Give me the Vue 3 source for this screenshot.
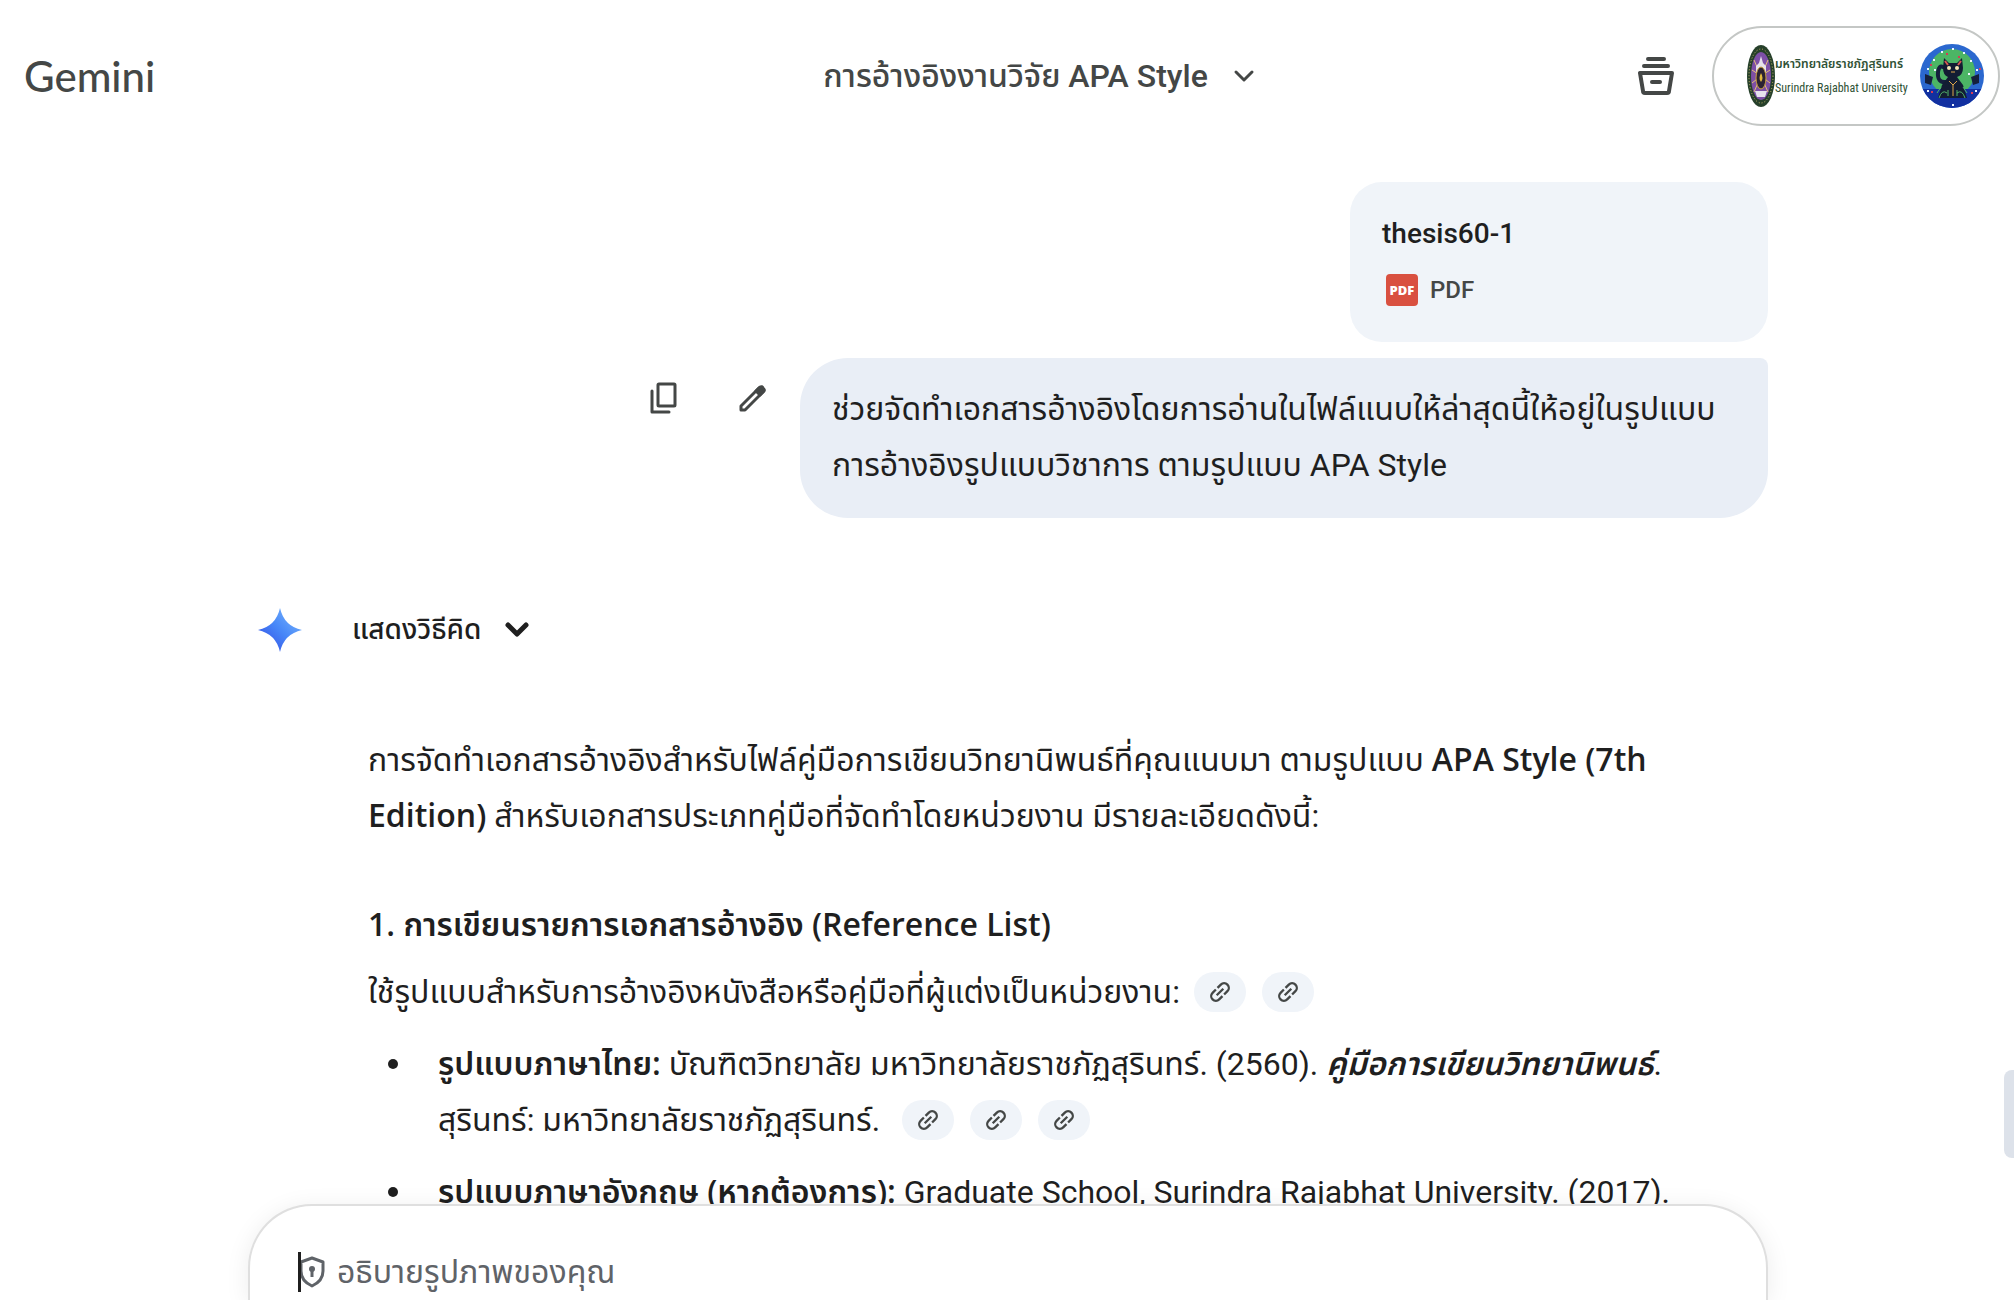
<script setup>
import { ref } from 'vue'

const prompt = ref('')
</script>

<template>
  <div class="app">
    <header class="top">
      <a class="brand" href="#">Gemini</a>
      <button class="title" type="button">
        <span>การอ้างอิงงานวิจัย APA Style</span>
        <svg class="chev" width="24" height="24" viewBox="0 0 24 24"><path d="M4 8l8 8 8-8" /></svg>
      </button>
      <div class="right">
        <button class="icon-btn" type="button" aria-label="Archive">
          <svg width="36" height="40" viewBox="0 0 36 40" fill="none" stroke="#444746" stroke-width="4" stroke-linecap="round" stroke-linejoin="round">
            <path d="M10 3h16M6 10h24" />
            <path d="M2 17h32l-3 18q0 2-2 2H7q-2 0-2-2z" />
            <path d="M14 26h8" />
          </svg>
        </button>
        <a class="account" href="#">
          <svg class="seal" width="28" height="62" viewBox="0 0 28 62">
            <ellipse cx="14" cy="31" rx="14" ry="31" fill="#26402a" />
            <ellipse cx="14" cy="31" rx="12" ry="27" fill="none" stroke="#c9ba6a" stroke-width="1" stroke-dasharray="1 2" />
            <ellipse cx="14" cy="31" rx="10" ry="24" fill="#7d4fa6" />
            <path d="M14 31L7 15M14 31L21 15M14 31L5 25M14 31L23 25M14 31L5 38M14 31L23 38M14 31L7 47M14 31L21 47" stroke="#e2c07a" stroke-width="1" />
            <path d="M14 11l2 7 3 3v7H9v-7l3-3z" fill="#e6e2ec" />
            <path d="M8 46h12l-2 6h-8z" fill="#e6e2ec" />
            <ellipse cx="14" cy="33" rx="5" ry="11" fill="#2b2233" stroke="#caa23c" stroke-width="1" />
            <path d="M14 28q3 5 0 9-3-3 0-9z" fill="#e2b93c" />
          </svg>
          <span class="uni">
            <b>มหาวิทยาลัยราชภัฏสุรินทร์</b>
            <span>Surindra Rajabhat University</span>
          </span>
          <svg class="avatar" width="64" height="64" viewBox="0 0 64 64">
            <defs><clipPath id="disc"><circle cx="32" cy="32" r="32" /></clipPath></defs>
            <g clip-path="url(#disc)">
              <path d="M0 0h64v64H0z" fill="#2b68cf" />
              <circle cx="32" cy="28" r="23" fill="#4cb565" />
              <path d="M0 45h64v19H0z" fill="#1230a0" />
              <path d="M5 30l8 3-2 8-6-2zM59 30l-8 3 2 8 6-2z" fill="#15203d" />
              <path d="M26 38q-9 1-8-10 1-7 5-5" fill="none" stroke="#15203d" stroke-width="4" stroke-linecap="round" />
              <path d="M24 14l5 5h8l5-5 1 10q0 7-6 9l6 8 4 13H18l4-13 6-8q-5-2-5-9z" fill="#131d33" />
              <path d="M19 54q3-9 8-5M45 54q-3-9-8-5M21 43l-4 6M43 43l4 6M28 52v-6M37 52v-6" fill="none" stroke="#52b56b" stroke-width="1" />
              <path d="M25 17l3 4M41 17l-3 4" stroke="#d75a50" stroke-width="2" />
              <circle cx="29" cy="24" r="2" fill="#f4e6b4" /><circle cx="37" cy="24" r="2" fill="#f4e6b4" />
              <path d="M31 28h4M29 37l4 4 4-4M33 41v11" fill="none" stroke="#e0a64a" stroke-width="1" />
              <g fill="#eef5ff"><path d="M21 7h2v2h-2zM32 4h2v2h-2zM43 8h2v2h-2zM13 15h2v2h-2zM50 16h2v2h-2zM7 24h2v2H7zM56 25h2v2h-2zM48 29h2v2h-2zM14 25h2v2h-2zM7 46h2v2H7zM55 46h2v2h-2zM32 60h2v2h-2z" /></g>
              <g fill="#d63b55"><path d="M26 9h2v2h-2zM38 12h2v2h-2zM10 20h2v2h-2zM59 24h2v2h-2zM11 47h2v2h-2zM51 48h2v2h-2z" /></g>
            </g>
          </svg>
        </a>
      </div>
    </header>

    <main class="scroller">
      <div class="column">
        <section class="user">
          <a class="file" href="#">
            <span class="file-name">thesis60-1</span>
            <span class="file-type"><i class="pdf">PDF</i><span>PDF</span></span>
          </a>
          <div class="ask">
            <button class="tool" type="button" aria-label="Copy">
              <svg width="48" height="48" viewBox="0 0 48 48" fill="none" stroke="#444746" stroke-width="3" stroke-linecap="round" stroke-linejoin="round">
                <rect x="18" y="10" width="17" height="22" rx="1" /><path d="M12 17v21h17" />
              </svg>
            </button>
            <button class="tool" type="button" aria-label="Edit">
              <svg width="48" height="48" viewBox="0 0 48 48" fill="none" stroke="#444746" stroke-width="3" stroke-linejoin="round">
                <path d="M13 36v-4l18-18 4 4-18 18z" /><path d="M28 17l4-4q2-1 3 1 2 2 1 3l-4 4z" fill="#444746" />
              </svg>
            </button>
            <p class="bubble">ช่วยจัดทำเอกสารอ้างอิงโดยการอ่านในไฟล์แนบให้ล่าสุดนี้ให้อยู่ในรูปแบบ<br>การอ้างอิงรูปแบบวิชาการ ตามรูปแบบ APA Style</p>
          </div>
        </section>

        <button class="thinking" type="button">
          <svg width="44" height="44" viewBox="0 0 44 44">
            <defs><linearGradient id="spark" x1="0" y1="1" x2="1" y2="0"><stop offset="0.2" stop-color="#3a5fea" /><stop offset="0.5" stop-color="#4787f8" /><stop offset="0.8" stop-color="#6aa8fb" /></linearGradient></defs>
            <path d="M22 0q4 18 22 22-18 4-22 22Q18 26 0 22 18 18 22 0z" fill="url(#spark)" />
          </svg>
          <span>แสดงวิธีคิด</span>
          <svg class="chev bold" width="28" height="28" viewBox="0 0 28 28"><path d="M5 9l9 9 9-9" /></svg>
        </button>

        <article class="answer">
          <p class="intro">การจัดทำเอกสารอ้างอิงสำหรับไฟล์คู่มือการเขียนวิทยานิพนธ์ที่คุณแนบมา ตามรูปแบบ <b>APA Style (7th<br>Edition)</b> สำหรับเอกสารประเภทคู่มือที่จัดทำโดยหน่วยงาน มีรายละเอียดดังนี้:</p>
          <h3>1. การเขียนรายการเอกสารอ้างอิง (Reference List)</h3>
          <p class="lead">ใช้รูปแบบสำหรับการอ้างอิงหนังสือหรือคู่มือที่ผู้แต่งเป็นหน่วยงาน:<span class="chips"><button v-for="n in 2" :key="n" class="chip" type="button" aria-label="Source"><svg width="28" height="28" viewBox="0 0 24 24"><path d="M8 12h8M11 8H7a4 4 0 0 0 0 8h4M13 8h4a4 4 0 0 1 0 8h-4" transform="rotate(-45 12 12)" /></svg></button></span></p>
          <ul>
            <li><b>รูปแบบภาษาไทย:</b> บัณฑิตวิทยาลัย มหาวิทยาลัยราชภัฏสุรินทร์. (2560). <b><em>คู่มือการเขียนวิทยานิพนธ์</em></b>.<br>สุรินทร์: มหาวิทยาลัยราชภัฏสุรินทร์. <span class="chips"><button v-for="n in 3" :key="n" class="chip" type="button" aria-label="Source"><svg width="28" height="28" viewBox="0 0 24 24"><path d="M8 12h8M11 8H7a4 4 0 0 0 0 8h4M13 8h4a4 4 0 0 1 0 8h-4" transform="rotate(-45 12 12)" /></svg></button></span></li>
            <li><b>รูปแบบภาษาอังกฤษ (หากต้องการ):</b> Graduate School, Surindra Rajabhat University. (2017).</li>
          </ul>
        </article>
      </div>
      <div class="thumb"></div>
    </main>

    <footer class="column composer">
      <span class="caret"></span>
      <svg width="26" height="32" viewBox="0 0 26 32" fill="none" stroke="#5f6368" stroke-width="3" stroke-linejoin="round">
        <path d="M13 2l11 4v9q0 10-11 15Q2 25 2 15V6z" /><circle cx="13" cy="13" r="3" fill="#5f6368" stroke="none" /><path d="M13 13v8" />
      </svg>
      <input v-model="prompt" type="text" aria-label="อธิบายรูปภาพของคุณ" placeholder="อธิบายรูปภาพของคุณ">
    </footer>
  </div>
</template>

<style>
body { margin: 0; overflow: hidden; }
</style>

<style scoped>
* { box-sizing: border-box; }
.app {
  height: 100vh;
  display: flex;
  flex-direction: column;
  padding-left: 2px;
  background: #fff;
  color: #1f1f1f;
  font-family: Roboto, "Noto Sans Thai", "Noto Sans", sans-serif;
  font-size: 32px;
  line-height: 56px;
}
button { padding: 0; border: 0; background: none; font: inherit; color: inherit; cursor: pointer; }
a { color: inherit; text-decoration: none; }
p, h3, ul { margin: 0; }
b, h3 { font-family: "Open Sans", "Noto Sans Thai", sans-serif; font-weight: 600; }
.answer b { line-height: 32px; }
svg { flex: none; }
.top {
  flex: none;
  display: grid;
  grid-template-columns: 1fr auto 1fr;
  align-items: center;
  padding: 26px 14px 0 22px;
  color: #444746;
}
.brand { font-family: Lato, sans-serif; font-size: 42px; font-weight: 500; }
.title { display: flex; align-items: center; gap: 24px; margin-left: 55px; white-space: nowrap; font-weight: 500; }
.chev { fill: none; stroke: currentColor; stroke-width: 3; stroke-linecap: round; stroke-linejoin: round; }
.chev.bold { stroke-width: 5; }
.right { display: flex; justify-content: flex-end; align-items: center; gap: 38px; }
.icon-btn, .tool { display: flex; }
.account {
  display: flex;
  align-items: center;
  width: 288px;
  height: 100px;
  padding: 0 14px 0 33px;
  border: 2px solid #c4c7c5;
  border-radius: 50px;
}
.uni { display: flex; flex-direction: column; gap: 4px; color: #2f5135; white-space: nowrap; line-height: 20px; font-size: 12px; }
.uni > span { font-family: "Roboto Condensed", Roboto, sans-serif; }
.avatar { margin-left: auto; }
.scroller { position: relative; flex: 1; min-height: 0; overflow: hidden; }
.column { width: 100%; max-width: 1520px; margin: 0 auto; }
.user { display: flex; flex-direction: column; align-items: flex-end; gap: 16px; padding-top: 56px; }
.file {
  display: flex;
  flex-direction: column;
  gap: 8px;
  width: 418px;
  height: 160px;
  padding: 28px 32px;
  border-radius: 32px;
  background: #f0f4f9;
  font-size: 28px;
  font-weight: 500;
  line-height: 48px;
}
.file-type { display: flex; align-items: center; gap: 12px; padding-left: 4px; font-size: 24px; color: #444746; }
.pdf {
  width: 32px;
  border-radius: 4px;
  background: #d95040;
  color: #fff;
  font: 800 13px/32px "Open Sans", sans-serif;
  text-align: center;
}
.ask { display: flex; align-items: flex-start; gap: 40px; }
.tool { margin-top: 16px; }
.bubble {
  min-width: 968px;
  margin-left: -16px;
  padding: 23px 32px 25px;
  border-radius: 48px 8px 48px 48px;
  background: #e9eef6;
  white-space: nowrap;
}
.thinking { display: flex; align-items: center; gap: 50px; margin: 84px 0 0 10px; font-size: 28px; font-weight: 500; }
.thinking .chev { margin-left: -28px; }
.answer { padding: 74px 0 0 120px; white-space: nowrap; }
h3 { margin-top: 52px; font-size: 32px; }
.lead { margin-top: 12px; }
.chips { display: inline-flex; align-items: center; gap: 16px; height: 56px; margin-left: 14px; vertical-align: top; }
.chip { display: flex; align-items: center; justify-content: center; width: 52px; height: 40px; border-radius: 20px; background: #f0f4f9; }
.chip path { fill: none; stroke: #444746; stroke-width: 2; }
ul { padding: 0 0 0 70px; list-style: none; }
li { position: relative; margin-top: 16px; }
li::before { content: ""; position: absolute; left: -50px; top: 23px; width: 10px; height: 10px; border-radius: 50%; background: currentColor; }
.thumb { position: absolute; right: 0; bottom: 46px; width: 10px; height: 88px; border-radius: 8px 0 0 8px; background: #dde2ea; }
.composer {
  position: relative;
  flex: none;
  display: flex;
  align-items: center;
  gap: 12px;
  height: 96px;
  padding: 37px 48px 0 49px;
  border: 2px solid #dfdfdf;
  border-bottom: 0;
  border-radius: 64px 64px 0 0;
  background: #fff;
  box-shadow: 0 4px 24px rgba(0, 0, 0, 0.08);
}
.composer input { flex: 1; min-width: 0; padding: 0; border: 0; outline: 0; background: none; font: inherit; color: inherit; }
.composer input::placeholder { color: #5f6368; opacity: 1; }
.caret { position: absolute; left: 48px; top: 46px; width: 3px; height: 40px; background: #1f1f1f; }
</style>
